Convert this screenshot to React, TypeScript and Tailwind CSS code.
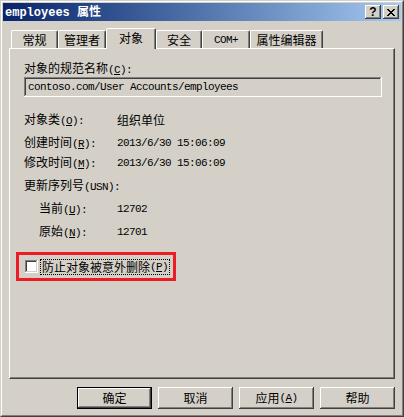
import React from "react";

const cjk = "font-[family-name:'Noto_Sans_CJK_SC',sans-serif]";
const mono = "font-[family-name:'Liberation_Mono','Noto_Sans_CJK_SC',monospace]";
// SimSun's half-width glyphs are 6px wide, so squeeze an 11px mono font a bit
const half = `${mono} text-[11px] tracking-[-0.6px]`;

const raised =
  "shadow-[inset_-1px_-1px_#404040,inset_1px_1px_#ffffff,inset_-2px_-2px_#808080,inset_2px_2px_#d4d0c8]";
const sunken =
  "shadow-[inset_-1px_-1px_#ffffff,inset_1px_1px_#808080,inset_-2px_-2px_#d4d0c8,inset_2px_2px_#404040]";

const Hk = ({ k }: { k: string }) => (
  <span className={half}>
    (<span className="underline">{k}</span>):
  </span>
);

const Row = ({
  label,
  k,
  value,
  mt,
  sub,
  cnValue,
}: {
  label: string;
  k?: string;
  value?: string;
  mt: string;
  sub?: boolean;
  cnValue?: boolean;
}) => (
  <div className={`flex h-[16px] items-center leading-[16px] ${mt} ${sub ? "pl-[15px]" : ""}`}>
    <div className={`${sub ? "w-[78px]" : "w-[93px]"} whitespace-nowrap`}>
      {label}
      {k ? <Hk k={k} /> : <span className={half}>(USN):</span>}
    </div>
    {value && <div className={cnValue ? "" : half}>{value}</div>}
  </div>
);

const tabs = [
  { name: "常规", w: "w-[47px]" },
  { name: "管理者", w: "w-[48px]" },
  { name: "对象", w: "w-[50px]", active: true },
  { name: "安全", w: "w-[46px]" },
  { name: "COM+", w: "w-[48px]", latin: true },
  { name: "属性编辑器", w: "w-[73px]" },
];

const buttons = [
  { label: "确定", def: true },
  { label: "取消" },
  { label: "应用", k: "A" },
  { label: "帮助" },
];

export default function App() {
  return (
    <div className={`w-[404px] h-[417px] bg-[#d4d0c8] text-black text-[12px] ${cjk} border border-t-[#d4d0c8] border-l-[#d4d0c8] border-r-[#404040] border-b-[#404040]`}>
      <div className="h-full border border-t-white border-l-white border-r-[#808080] border-b-[#808080] p-[1px] flex flex-col">
        {/* title bar */}
        <div className="h-[18px] flex items-center justify-between pl-[2px] pr-[2px] bg-linear-to-r from-[#0a246a] to-[#a6caf0]">
          <div className="text-white font-bold text-[12px] leading-[18px] whitespace-nowrap">
            <span className={`${mono} text-[12px]`}>employees </span>
            <span>属性</span>
          </div>
          <div className="flex gap-[2px]">
            <div className={`w-[16px] h-[14px] bg-[#d4d0c8] ${raised} flex items-center justify-center`}>
              <span className="font-[family-name:'Liberation_Sans',sans-serif] font-bold text-[12px] leading-[12px] -mt-[1px]">?</span>
            </div>
            <div className={`w-[16px] h-[14px] bg-[#d4d0c8] ${raised} flex items-center justify-center`}>
              <svg width="8" height="7" viewBox="0 0 8 7" shapeRendering="crispEdges">
                <path d="M0 0h2v1h1v1h2v-1h1v-1h2v1h-1v1h-1v1h-1v1h1v1h1v1h1v1h-2v-1h-1v-1h-2v1h-1v1h-2v-1h1v-1h1v-1h1v-1h-1v-1h-1v-1h-1z" fill="#000" />
              </svg>
            </div>
          </div>
        </div>

        {/* body */}
        <div className="flex-1 flex flex-col px-[6px] pt-[7px] pb-[5px]">
          <div className="h-[20px] flex items-end pl-[2px]">
            {tabs.map((t) => (
              <div
                key={t.name}
                className={`${t.w} ${
                  t.active ? "h-[21px] -mb-px relative z-10 pb-[3px]" : "h-[18px]"
                } rounded-t-[2px] bg-[#d4d0c8] border-t border-l border-r border-t-white border-l-white border-r-[#404040] shadow-[inset_-1px_0_#808080] flex items-center justify-center leading-[16px] whitespace-nowrap`}
              >
                {t.latin ? <span className={half}>{t.name}</span> : t.name}
              </div>
            ))}
          </div>

          {/* panel */}
          <div className="h-[331px] border border-t-white border-l-white border-r-[#404040] border-b-[#404040] shadow-[inset_-1px_-1px_#808080] flex flex-col pl-[14px] pr-[12px] pt-[11px]">
            <div className="h-[16px] leading-[16px] whitespace-nowrap">
              对象的规范名称
              <Hk k="C" />
            </div>
            <div className={`mt-[1px] h-[20px] bg-[#d4d0c8] ${sunken} flex items-center pl-[4px] ${half}`}>
              contoso.com/User Accounts/employees
            </div>

            <Row mt="mt-[15px]" label="对象类" k="O" value="组织单位" cnValue />
            <Row mt="mt-[7px]" label="创建时间" k="R" value="2013/6/30 15:06:09" />
            <Row mt="mt-[4px]" label="修改时间" k="M" value="2013/6/30 15:06:09" />
            <Row mt="mt-[7px]" label="更新序列号" />
            <Row mt="mt-[7px]" sub label="当前" k="U" value="12702" />
            <Row mt="mt-[7px]" sub label="原始" k="N" value="12701" />

            <div className="mt-[12px] -ml-[8px] w-[160px] h-[29px] border-[3px] border-[#ed1c24] flex items-center pl-[6px]">
              <div className={`w-[13px] h-[13px] bg-white ${sunken}`} />
              <div className="ml-[2px] h-[16px] border border-dotted border-black px-[1px] flex items-center leading-[14px] whitespace-nowrap">
                防止对象被意外删除
                <span className={half}>
                  (<span className="underline">P</span>)
                </span>
              </div>
            </div>
          </div>

          {/* buttons */}
          <div className="mt-[8px] flex justify-end gap-[6px]">
            {buttons.map((b) => (
              <div
                key={b.label}
                className={`w-[75px] h-[22px] bg-[#d4d0c8] flex items-center justify-center leading-[16px] ${
                  b.def
                    ? "shadow-[inset_0_0_0_1px_#000000,inset_-2px_-2px_#404040,inset_2px_2px_#ffffff,inset_-3px_-3px_#808080]"
                    : raised
                }`}
              >
                {b.label}
                {b.k && (
                  <span className={half}>
                    (<span className="underline">{b.k}</span>)
                  </span>
                )}
              </div>
            ))}
          </div>
        </div>
      </div>
    </div>
  );
}
